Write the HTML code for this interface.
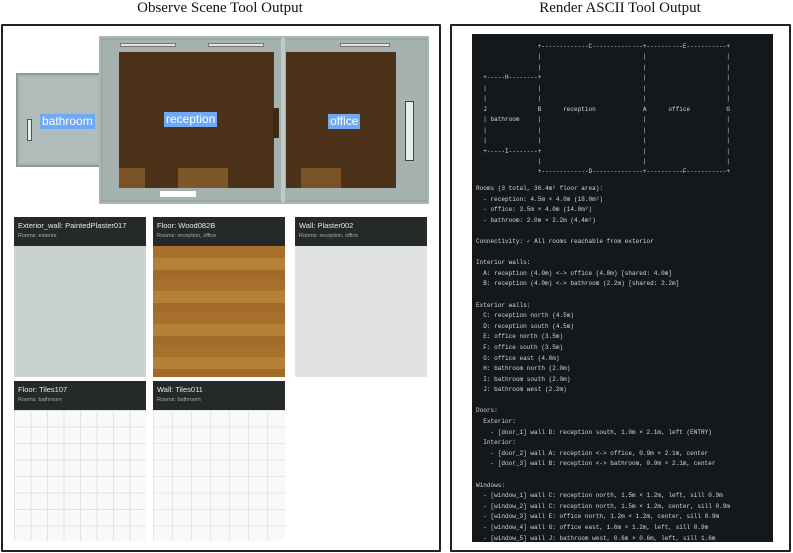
<!DOCTYPE html>
<html><head><meta charset="utf-8"><style>
*{margin:0;padding:0;box-sizing:border-box}
body{width:793px;height:553px;background:#fff;position:relative;overflow:hidden;font-family:"Liberation Sans",sans-serif}
.t{position:absolute;top:0;font-family:"Liberation Serif",serif;font-size:15px;color:#111;text-align:center}
.panel{position:absolute;top:24px;height:528px;border:2px solid #222;border-radius:1px}
.a{position:absolute}
.lbl{position:absolute;background:#6fa8f5;color:#fff;font-size:12px;line-height:15px;padding:0 2px}
.card{position:absolute;width:132px;height:160px}
.hd{height:29px;background:#25292a;color:#e8e8e8;padding:4px 4px 0 4px}
.hd b{display:block;font-weight:normal;font-size:7.5px;line-height:10px}
.hd i{display:block;font-style:normal;font-size:5.5px;color:#aaa;line-height:10px}
.img{height:131px}
.term{position:absolute;left:472px;top:34px;width:301px;height:508px;background:#15181a}
pre{position:absolute;font-family:"Liberation Mono",monospace;font-size:6.05px;line-height:10.6px;color:#d4d6d6;white-space:pre}
</style></head><body>
<div class="t" style="left:0;width:440px">Observe Scene Tool Output</div>
<div class="t" style="left:450px;width:340px">Render ASCII Tool Output</div>
<div class="panel" style="left:1px;width:440px"></div>
<div class="panel" style="left:450px;width:341px"></div>

<!-- scene -->
<div class="a" style="left:16px;top:73px;width:86px;height:94px;background:#a7b4b1;border:2px solid #8d9a97"></div>
<div class="a" style="left:20px;top:77px;width:78px;height:86px;background:#b0bcb9"></div>
<div class="a" style="left:27px;top:119px;width:5px;height:22px;background:#e8ecea;border:1px solid #555"></div>
<div class="a" style="left:99px;top:36px;width:330px;height:168px;background:#9ba8a5;border:2px solid #aab6b3"></div>
<div class="a" style="left:103px;top:40px;width:322px;height:160px;background:#a5b2af"></div>
<div class="a" style="left:119px;top:52px;width:155px;height:136px;background:#4b3219"></div>
<div class="a" style="left:286px;top:52px;width:110px;height:136px;background:#4b3219"></div>
<div class="a" style="left:281px;top:38px;width:4px;height:164px;background:#c0cac8"></div>
<div class="a" style="left:273px;top:108px;width:6px;height:30px;background:#3e2914"></div>
<div class="a" style="left:119px;top:168px;width:26px;height:20px;background:#7a5226"></div>
<div class="a" style="left:178px;top:168px;width:50px;height:20px;background:#7e5628"></div>
<div class="a" style="left:301px;top:168px;width:40px;height:20px;background:#7a5226"></div>
<div class="a" style="left:160px;top:191px;width:36px;height:6px;background:#fff"></div>
<div class="a" style="left:120px;top:43px;width:56px;height:4px;background:#dfe5e3;border:1px solid #777"></div>
<div class="a" style="left:208px;top:43px;width:56px;height:4px;background:#dfe5e3;border:1px solid #777"></div>
<div class="a" style="left:340px;top:43px;width:50px;height:4px;background:#dfe5e3;border:1px solid #777"></div>
<div class="a" style="left:405px;top:101px;width:9px;height:60px;background:#e8ecea;border:1px solid #444"></div>
<div class="lbl" style="left:40px;top:114px">bathroom</div>
<div class="lbl" style="left:164px;top:112px">reception</div>
<div class="lbl" style="left:328px;top:114px">office</div>

<!-- cards -->
<div class="card" style="left:14px;top:217px"><div class="hd"><b>Exterior_wall: PaintedPlaster017</b><i>Rooms: exterior</i></div><div class="img" style="background:#c9d3ce"></div></div>
<div class="card" style="left:153px;top:217px"><div class="hd"><b>Floor: Wood082B</b><i>Rooms: reception, office</i></div><div class="img" style="background:repeating-linear-gradient(180deg,#a8702a 0 12px,#b5803a 12px 24px,#a06a28 24px 33px)"></div></div>
<div class="card" style="left:295px;top:217px"><div class="hd"><b>Wall: Plaster002</b><i>Rooms: reception, office</i></div><div class="img" style="background:#e1e3e0"></div></div>
<div class="card" style="left:14px;top:381px"><div class="hd"><b>Floor: Tiles107</b><i>Rooms: bathroom</i></div><div class="img" style="background-color:#f8f9f8;background-image:linear-gradient(90deg,#dfe3e1 1px,transparent 1px),linear-gradient(180deg,#dfe3e1 1px,transparent 1px);background-size:16.5px 16.5px"></div></div>
<div class="card" style="left:153px;top:381px"><div class="hd"><b>Wall: Tiles011</b><i>Rooms: bathroom</i></div><div class="img" style="background-color:#f9f9f9;background-image:linear-gradient(90deg,#e6e8e7 1px,transparent 1px),linear-gradient(180deg,#e6e8e7 1px,transparent 1px);background-size:19px 16.5px"></div></div>

<div class="term"></div>
<pre style="left:476px;top:42px;line-height:10.45px">                 +-------------C--------------+----------E-----------+
                 |                            |                      |
                 |                            |                      |
  +-----H--------+                            |                      |
  |              |                            |                      |
  |              |                            |                      |
  J              B      reception             A      office          G
  | bathroom     |                            |                      |
  |              |                            |                      |
  |              |                            |                      |
  +-----I--------+                            |                      |
                 |                            |                      |
                 +-------------D--------------+----------F-----------+</pre>
<pre style="left:476px;top:184px">Rooms (3 total, 36.4m² floor area):
  - reception: 4.5m × 4.0m (18.0m²)
  - office: 3.5m × 4.0m (14.0m²)
  - bathroom: 2.0m × 2.2m (4.4m²)

Connectivity: ✓ All rooms reachable from exterior

Interior walls:
  A: reception (4.0m) &lt;-&gt; office (4.0m) [shared: 4.0m]
  B: reception (4.0m) &lt;-&gt; bathroom (2.2m) [shared: 2.2m]

Exterior walls:
  C: reception north (4.5m)
  D: reception south (4.5m)
  E: office north (3.5m)
  F: office south (3.5m)
  G: office east (4.0m)
  H: bathroom north (2.0m)
  I: bathroom south (2.0m)
  J: bathroom west (2.2m)

Doors:
  Exterior:
    - [door_1] wall D: reception south, 1.0m × 2.1m, left (ENTRY)
  Interior:
    - [door_2] wall A: reception &lt;-&gt; office, 0.9m × 2.1m, center
    - [door_3] wall B: reception &lt;-&gt; bathroom, 0.9m × 2.1m, center

Windows:
  - [window_1] wall C: reception north, 1.5m × 1.2m, left, sill 0.9m
  - [window_2] wall C: reception north, 1.5m × 1.2m, center, sill 0.9m
  - [window_3] wall E: office north, 1.2m × 1.2m, center, sill 0.9m
  - [window_4] wall G: office east, 1.6m × 1.2m, left, sill 0.9m
  - [window_5] wall J: bathroom west, 0.6m × 0.6m, left, sill 1.6m</pre>
</body></html>
